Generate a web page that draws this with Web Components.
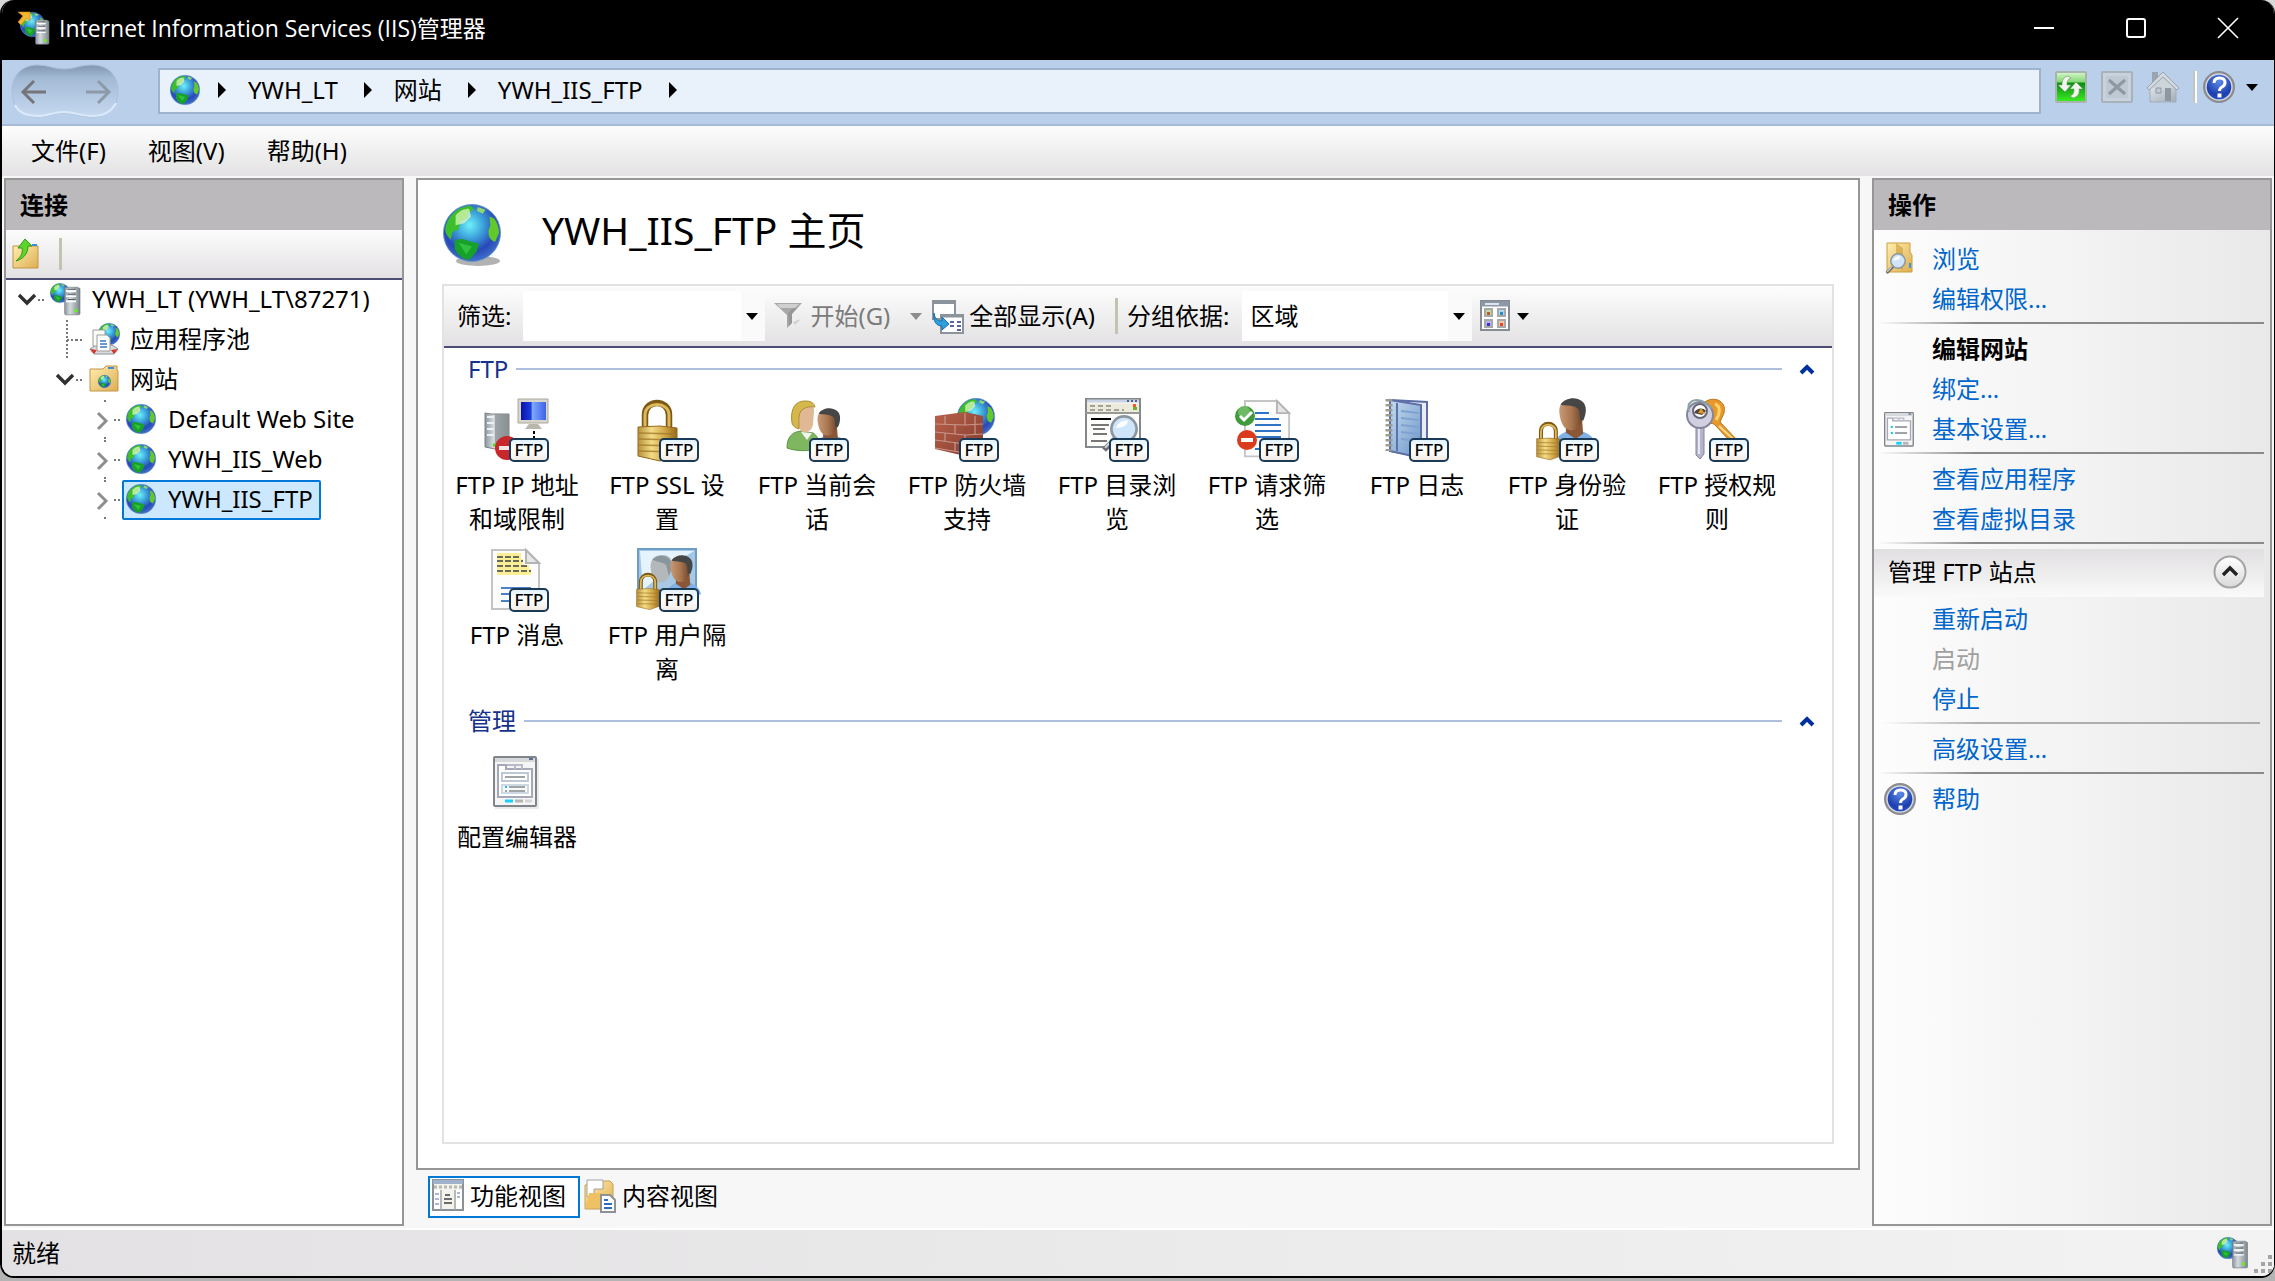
<!DOCTYPE html>
<html lang="zh-CN">
<head>
<meta charset="utf-8">
<title>Internet Information Services (IIS)管理器</title>
<style>
html, body { height: 100%; margin: 0; }
body { background: linear-gradient(#d8d8d8 50%, #b4b4b4 50%); font: 24px/34px "Noto Sans", "Noto Sans CJK SC", sans-serif; color: #000; overflow: hidden; }
</style>
</head>
<body>
<iis-window></iis-window>
<script>
const defs = `<defs>
<radialGradient id="sea" cx=".46" cy=".36" r=".62"><stop offset="0" stop-color="#6ff0fb"/><stop offset=".35" stop-color="#3fa9dc"/><stop offset=".75" stop-color="#2848b8"/><stop offset="1" stop-color="#3b6cc8"/></radialGradient>
<linearGradient id="gold" x2="1"><stop offset="0" stop-color="#b8913c"/><stop offset=".35" stop-color="#f3dc86"/><stop offset=".7" stop-color="#d0a444"/><stop offset="1" stop-color="#94681c"/></linearGradient>
<linearGradient id="steel" x2="1"><stop offset="0" stop-color="#8d979f"/><stop offset=".35" stop-color="#d4dade"/><stop offset="1" stop-color="#7c868c"/></linearGradient>
<linearGradient id="folder" x2="1" y2="1"><stop offset="0" stop-color="#ffeeb0"/><stop offset="1" stop-color="#dfae52"/></linearGradient>
<linearGradient id="badge" y2="1" x2="0"><stop offset="0" stop-color="#dff2fc"/><stop offset=".5" stop-color="#fff"/><stop offset="1" stop-color="#f3e9e2"/></linearGradient>
<linearGradient id="screen" x2="1"><stop offset="0" stop-color="#0a12a8"/><stop offset=".4" stop-color="#1c3de0"/><stop offset=".45" stop-color="#7fa8ff"/><stop offset="1" stop-color="#3d62e8"/></linearGradient>
<linearGradient id="brick" x2="1" y2="1"><stop offset="0" stop-color="#b8634c"/><stop offset="1" stop-color="#843a2c"/></linearGradient>
<linearGradient id="skin" x2="1"><stop offset="0" stop-color="#c99a74"/><stop offset=".5" stop-color="#a97650"/><stop offset="1" stop-color="#6b4128"/></linearGradient>
<linearGradient id="book" x2="1" y2="1"><stop offset="0" stop-color="#c6dbee"/><stop offset="1" stop-color="#6c95c8"/></linearGradient>
<linearGradient id="green" x2="0" y2="1"><stop offset="0" stop-color="#d9f7cf"/><stop offset=".34" stop-color="#7fd870"/><stop offset=".36" stop-color="#0b8a14"/><stop offset="1" stop-color="#3cf023"/></linearGradient>
<radialGradient id="help" cx=".5" cy=".3" r=".8"><stop offset="0" stop-color="#5f8ae8"/><stop offset=".6" stop-color="#1c3fae"/><stop offset="1" stop-color="#2d5fd8"/></radialGradient>
<linearGradient id="grey" x2="1" y2="1"><stop offset="0" stop-color="#dfe5ea"/><stop offset="1" stop-color="#a3adb8"/></linearGradient>
<linearGradient id="knob" x2="0" y2="1"><stop offset="0" stop-color="#fff"/><stop offset="1" stop-color="#d9d9d9"/></linearGradient>
<linearGradient id="blob" x2="0" y2="1"><stop offset="0" stop-color="#8197b0"/><stop offset=".25" stop-color="#a3bad5"/><stop offset="1" stop-color="#c6daf1"/></linearGradient>
</defs>`;

const at = (x, y, s, body) => `<g transform="translate(${x} ${y}) scale(${s})">${body}</g>`;
const globeArt = `<circle cx="30" cy="30" r="29.5" fill="url(#sea)" stroke="#6f95c8" stroke-width="1"/>
<path d="M3 22C7 9 18 2 29 2l3 4-6 3-1 6-7 3-2 8-6 3-2 8-4-5c-2-3-2-6-1-10z" fill="#3cbf2a"/><path d="M13 12c4-5 9-7 14-7l2 8-7 7-9 2z" fill="#e8fbc0" opacity=".7"/>
<path d="M12 38c5-3 10-2 14 0l11 3-2 8-8 9c-8-1-13-7-15-12z" fill="#17a02a"/><path d="M16 40l14 4-6 8z" fill="#3cd048" opacity=".7"/>
<path d="M48 13l5 2c3 4 5 9 5 15l-4 9c-5-1-7-5-7-11l2-6z" fill="#62c92d"/><path d="M36 3l8 3-3 4-6-3z" fill="#8fd870"/>`;
const globe = (x, y, d) => at(x, y, d / 60, globeArt);
const towerArt = `<path d="M1 2h20l4 2v40l-2 1H2l-1-2z" fill="url(#steel)" stroke="#6d777e"/><path d="M3 8h16M3 16h16M3 24h16" stroke="#fff" stroke-width="2.4"/><path d="M6 5h12M6 13h12M6 21h12" stroke="#515b63" stroke-width="1.6"/><rect x="16" y="36" width="5" height="5" fill="#63f020"/>`;
const ftp = `<rect x="25" y="41" width="38" height="22" rx="4" fill="url(#badge)" stroke="#1b3a57" stroke-width="2"/><text x="44" y="58" text-anchor="middle" font-family="Noto Sans, sans-serif" font-size="17" font-weight="500" fill="#000">FTP</text>`;
const lockArt = `<path d="M8 30V15C8 -1 32 -1 32 15v15" fill="none" stroke="#7c5a14" stroke-width="6.5"/><path d="M8 30V15C8 1 32 1 32 15v15" fill="none" stroke="#dcb95c" stroke-width="3"/><path d="M1 27l22 -1 17 2v27l-17 6-22-5z" fill="url(#gold)" stroke="#94681c"/><path d="M2 33l38 1M2 39l38 1M2 45l38 1M2 51l38 1" stroke="#a37a2a" stroke-width="1.4" opacity=".8"/>`;
const manArt = `<path d="M0 44c2-10 10-14 19-14s18 4 20 14z" fill="#7fb0e6"/><path d="M11 20h15l1 13-7 5-9-6z" fill="#8a5836"/><path d="M5 14C4 6 9 1 17 1s11 5 10 14c0 8-5 15-11 15S6 24 5 14z" fill="url(#skin)"/><path d="M6 6C10 0 20-2 26 3c5 4 4 12 1 18l-3-1c0-5 0-9-3-11C16 6 11 8 6 6z" fill="#464646"/>`;
const womanArt = `<path d="M0 47c0-11 5-16 14-17l12 2c5 3 6 8 6 15-10 4-24 3-32 0z" fill="#7fb760" stroke="#5c9644"/><path d="M14 31l6 8 5-7z" fill="#f4f4ee"/><path d="M8 20C6 8 10 3 18 3c7 0 9 3 9 6l-1 15c-2 7-8 9-12 6z" fill="#e0b994"/><path d="M5 22C3 8 8 0 18 0c6 0 9 2 10 6-6-1-12 1-14 4-3 5-2 9-2 18-4-1-6-3-7-6z" fill="#d5b74c" stroke="#ab8d30"/>`;
const pageArt = `<path d="M1 1h34l13 13v46H1z" fill="#fcfcfc" stroke="#c4c4c4" stroke-width="2"/><path d="M35 1v13h13z" fill="#e6e6e6" stroke="#b4b4b4" stroke-width="2"/>`;
const lens = (x, y, s) => at(x, y, s, `<path d="M-8 9L-19 20" stroke="#6c6c70" stroke-width="5"/><path d="M-9 8L-18 18" stroke="#d6d6d6" stroke-width="2"/><circle r="12" fill="#cfe5fb" stroke="#8b959e" stroke-width="2.5"/><path d="M-8-1q4-8 12-7-1 7-12 7z" fill="#fff"/>`);
const tri = c => `<path d="M0 0h12L6 7z" fill="${c}"/>`;
const formArt = `<rect x="1" y="1" width="42" height="49" rx="1" fill="#f5f5f5" stroke="#7f858b" stroke-width="2"/><path d="M2 4h40" stroke="#d5d9dc" stroke-width="4"/><path d="M36 3h4" stroke="#5d708a" stroke-width="2"/><path d="M5 9h8v4h26v28H5z" fill="#fff" stroke="#a6a8b8" stroke-width="2"/><path d="M14 9h15v4M22 9v4" fill="none" stroke="#b9bcc8" stroke-width="2"/>`;

/* name: [viewBox width, viewBox height, artwork] */
const art = {
  globe: [32, 32, globe(0, 1, 30)],
  bigglobe: [64, 64, `<ellipse cx="36" cy="59" rx="22" ry="5" fill="#000" opacity=".3"/>` + globe(1, 2, 58)],
  app: [32, 34, globe(2, 1, 25) + `<path d="M0 1h12v9l-3-3-6 7-3-3 5-6z" fill="#f5b52e" stroke="#c9851b" stroke-width=".6"/>` + at(17, 8, .56, towerArt)],
  server: [32, 34, globe(0, 1, 20) + at(14, 4, .64, towerArt)],
  pool: [32, 34, globe(10, 1, 22) + `<path d="M2 27l6-4h16l6 4-4 5H6z" fill="#d8dde0" stroke="#8a9298"/><path d="M2 27l7 1-3 4zM30 27l-7 1 3 4z" fill="#d8362a"/><path d="M5 8h12v16H5z" fill="#fbfbf6" stroke="#9c9c9c"/><path d="M9 13h10l3 3v13H9z" fill="#fff" stroke="#9c9c9c"/><path d="M12 19h6M12 22h7M12 25h7" stroke="#3a78c0" stroke-width="1.6"/>`],
  sites: [32, 32, `<path d="M2 6h13l3-3h11v4l1 1v20H2z" fill="url(#folder)" stroke="#c09648"/><path d="M20 5h6" stroke="#3c8ce0" stroke-width="2"/>` + globe(10, 12, 13)],
  connect: [32, 34, `<path d="M3 9h25v22H3z" fill="url(#folder)" stroke="#c09648"/><path d="M22 8h5" stroke="#3c8ce0" stroke-width="2"/><path d="M6 24c6-5 7-9 6-13H8l7-9 7 7h-4c0 8-5 13-12 15z" fill="#5fd42c" stroke="#2f9a18"/>`],
  browse: [32, 34, `<path d="M3 1h23v9l2 3v17H3z" fill="url(#folder)" stroke="#caa03c"/><path d="M12 1v20l7 8V6z" fill="#c99d38" opacity=".6"/><path d="M26 21v5" stroke="#2d9cf0" stroke-width="2"/>` + lens(14, 19, .6)],
  form: [32, 34, at(0, 0, .68, formArt + `<path d="M10 22h3M10 31h3" stroke="#18c0f0" stroke-width="3"/><path d="M16 22h18M16 31h18" stroke="#a0a4a8" stroke-width="3"/><path d="M18 46h8" stroke="#18d0ff" stroke-width="4"/><path d="M28 46h8" stroke="#b4b4b4" stroke-width="4"/>`)],
  config: [64, 64, `<rect x="10" y="9" width="44" height="50" fill="#000" opacity=".08"/>` + at(8, 6, 1, formArt + `<rect x="9" y="17" width="26" height="8" fill="#fff" stroke="#bcc8d4" stroke-width="2"/><path d="M12 21h20" stroke="#a0a4a4" stroke-width="2"/><rect x="9" y="29" width="26" height="8" fill="#f6f8fa" stroke="#ccd8e2" stroke-width="2"/><path d="M12 31h2" stroke="#18c0f0" stroke-width="2"/><path d="M16 31h16M12 35h2M16 35h16" stroke="#a0a4a4" stroke-width="2"/><path d="M12 45h8" stroke="#18d0ff" stroke-width="3"/><path d="M22 45h8" stroke="#b4b4b4" stroke-width="3"/><path d="M32 45h7" stroke="#d4d4d4" stroke-width="3"/>`)],
  refresh: [32, 32, `<rect x="1" y="1" width="30" height="30" rx="1" fill="url(#green)" stroke="#a8b4ac" stroke-width="2"/><path d="M13 5c-5 1-6 5-6 9H3l7 7 6-7h-4c0-4 1-6 4-7zM18 27c5-1 7-5 6-9h4l-7-7-6 7h4c0 4-1 6-4 7z" fill="#f2f2ee" stroke="#5a9a54" stroke-width=".6"/>`],
  stop: [32, 32, `<rect x="1" y="1" width="30" height="30" rx="1" fill="#c8d2dc" stroke="#a9b1b9" stroke-width="2"/><rect x="5" y="5" width="22" height="22" fill="#bfc9d3"/><path d="M8 9l16 14M24 9L8 23" stroke="#8f99a3" stroke-width="3.4"/>`],
  home: [32, 32, `<path d="M5 1h6v10H5z" fill="#9aa5b0"/><path d="M3 15h26v16H3z" fill="url(#grey)" stroke="#a3adb8"/><path d="M5 17L16 6l11 11z" fill="#cdd4da"/><path d="M0 17L16 1l16 16-2 2L16 6 2 19z" fill="#d3d9de" stroke="#99a4b0"/><path d="M18 17h6v13h-6z" fill="#8d97a2"/><path d="M9 17h5v5H9z" fill="#c3ccd4" stroke="#8d97a2"/>`],
  help: [32, 32, `<circle cx="16" cy="16" r="14.5" fill="url(#help)" stroke="#8c8c90" stroke-width="3"/><circle cx="16" cy="16" r="13" fill="none" stroke="#d5d8e0" stroke-width="1.4"/><path d="M11 12q0-5 5.5-5t5.5 4.500q0 3-3 4.500-2.500 1.300-2.500 4" fill="none" stroke="#fff" stroke-width="3"/><rect x="14.500" y="22.500" width="4" height="4" fill="#fff"/>`],
  nav: [110, 56, `<path d="M2 28C2 12 12 2 28 2c10 0 16 4 26 4S70 2 82 2c16 0 26 10 26 26S98 54 82 54c-12 0-18-4-28-4s-16 4-26 4C12 54 2 44 2 28z" fill="url(#blob)" stroke="#a9c0dc"/><path d="M5 42c4 8 12 11 23 11 10 0 16-4 26-4s16 4 28 4c12 0 20-5 24-13" fill="none" stroke="#dbe9f9" stroke-width="2"/><path d="M36 29H14M24 18L13 29l11 11" fill="none" stroke="#74767a" stroke-width="3"/><path d="M76 29h22M88 18l11 11-11 11" fill="none" stroke="#8d9aa8" stroke-width="3"/>`],
  min: [20, 20, `<path d="M0 10h20" stroke="#fff" stroke-width="2"/>`],
  max: [20, 20, `<rect x="1" y="1" width="18" height="18" rx="2" fill="none" stroke="#fff" stroke-width="2"/>`],
  close: [20, 20, `<path d="M0 0l20 20M20 0L0 20" stroke="#fff" stroke-width="1.600"/>`],
  down: [12, 7, tri('#000')],
  downgrey: [12, 7, tri('#8c8c8c')],
  right: [10, 16, `<path d="M1 0v16l8-8z" fill="#000"/>`],
  funnel: [32, 32, `<path d="M1 3h28L19 14v9l-5 5V15z" fill="#a8a8a8"/><path d="M4 4h22l-4 4H7z" fill="#cfcfcf"/><path d="M15 13l4-4 6-2-6 7v9l-3 3z" fill="#8c8c8c" opacity=".6"/><path d="M20 22l8-3-6 6z" fill="#d0d0d0"/>`],
  showall: [32, 34, `<path d="M1 2h22v18H1z" fill="#fff" stroke="#8d939b" stroke-width="2"/><path d="M0 3h24" stroke="#8d939b" stroke-width="4"/><path d="M9 16h22v18H9z" fill="#fff" stroke="#8d939b" stroke-width="2"/><path d="M8 17h24" stroke="#8d939b" stroke-width="3"/><path d="M18 23h4M25 23h4M18 27h4M25 27h4M25 31h4" stroke="#5b62a8" stroke-width="2"/><path d="M2 14c1 6 3 8 8 8v-4l7 7-7 6v-4C4 27 1 22 2 14z" fill="#2f9fe0" stroke="#1770a8"/>`],
  views: [32, 32, `<rect x="1" y="1" width="28" height="29" fill="#fff" stroke="#868c94" stroke-width="2"/><path d="M1 4h28" stroke="#8d98a8" stroke-width="5"/><path d="M5 4h14" stroke="#dde4ec" stroke-width="2"/><g stroke="#a8a8a8" stroke-width="2"><rect x="5" y="9" width="7" height="7" fill="#c4d8a0"/><rect x="18" y="9" width="7" height="7" fill="#a8d8f0"/><rect x="5" y="20" width="7" height="7" fill="#b8b0f4"/><rect x="18" y="20" width="7" height="7" fill="#f4c4b0"/></g><path d="M7 12h3v3H7z" fill="#b06030"/><path d="M20 12h3v3h-3z" fill="#3088c8"/><path d="M7 23h3v3H7z" fill="#4030c0"/><path d="M20 23h3v3h-3z" fill="#e04820"/>`],
  up: [16, 12, `<path d="M2 10l6-6 6 6" fill="none" stroke="#00309c" stroke-width="4"/>`],
  knob: [34, 34, `<circle cx="17" cy="17" r="15.500" fill="url(#knob)" stroke="#a4a4a4" stroke-width="2"/><path d="M10 20l7-7 7 7" fill="none" stroke="#222" stroke-width="3.400"/>`],
  features: [32, 32, `<rect x="1" y="0" width="30" height="30" fill="#f4f4ee" stroke="#8c9198" stroke-width="2"/><path d="M1 2h30" stroke="#9eb2cc" stroke-width="4"/><path d="M2 7h28" stroke="#b8b8b0" stroke-width="3" stroke-dasharray="3 2"/><path d="M2 10h6v19H2zM24 10h6v19h-6z" fill="#fff"/><path d="M9 10v20M23 10v20" stroke="#a4a4a4" stroke-width="1.500"/><path d="M13 15h5M12 19h8M12 23h8" stroke="#6c6c6c" stroke-width="2"/><path d="M3 14h4M3 19h4M3 24h4M25 13h3M25 17h3" stroke="#a8b8dc" stroke-width="2"/>`],
  content: [32, 34, `<path d="M1 6h9V2h16l3 3v22l-3 3H1z" fill="url(#folder)" stroke="#c8a050"/><path d="M3 1h16v9h-9v8H3z" fill="#fff" stroke="#a0a0a0"/><path d="M5 14h15l-4 15H1z" fill="#eec264"/><path d="M17 16h9l5 5v12H17z" fill="#fff" stroke="#8c9298" stroke-width="2"/><path d="M20 21h4M20 25h8M20 29h8" stroke="#2a6fc0" stroke-width="2"/>`],
  connected: [36, 34, globe(1, 1, 22) + at(16, 4, .62, towerArt)],
  grip: [22, 22, `<path d="M16 1h4v4h-4zM16 8h4v4h-4zM16 15h4v4h-4zM9 8h4v4H9zM9 15h4v4H9zM2 15h4v4H2z" fill="#a4a4a4"/>`],
  open: [22, 40, `<path d="M3 15l8 8 8-8" fill="none" stroke="#303030" stroke-width="3.400"/>`],
  closed: [22, 40, `<path d="M6 13l8 8-8 8" fill="none" stroke="#8e8e8e" stroke-width="3"/><path d="M13 0v3M13 37v3" stroke="#777" stroke-width="2" stroke-dasharray="2 2"/>`],
  leaf: [22, 40, `<path d="M13 0v40M13 20h9" fill="none" stroke="#777" stroke-width="2" stroke-dasharray="2 2"/>`],
  ip: [64, 64, at(0, 14, 1, `<path d="M0 1l6 1h18v32l-14 3-10-2z" fill="url(#steel)" stroke="#7a8288"/><path d="M10 2h14v32l-14 3z" fill="#8b9396" opacity=".7"/><path d="M2 5h7M2 11h7M2 17h7M2 23h7" stroke="#eef2f4" stroke-width="2"/><path d="M8 33h4" stroke="#4be020" stroke-width="3"/>`) + `<path d="M33 1h30v24H33z" fill="#d9d6cc" stroke="#a9a69a"/><path d="M36 4h25v18H36z" fill="url(#screen)"/><path d="M44 26h9l4 5H40z" fill="#b9b6ac"/><path d="M49 33v7" stroke="#000" stroke-width="2" stroke-dasharray="3 2"/><circle cx="22" cy="50" r="12" fill="#c8282c"/><path d="M14 50h14" stroke="#f4e4e4" stroke-width="4"/>` + ftp],
  ssl: [64, 64, at(2, 2, 1, lockArt) + ftp],
  session: [64, 64, at(28, 10, .92, manArt) + at(2, 3, 1, womanArt) + ftp],
  firewall: [64, 64, globe(22, 0, 38) + `<path d="M0 18l30-4 18 4v38l-18 2-30-7z" fill="url(#brick)"/><path d="M0 26l30 1 18-1M0 34l30 3 18-1M0 42l30 4 18-1M0 50l30 5M10 18v8M30 15v12M20 27v9M40 27v9M10 35v9M30 37v9M20 44v9M40 18v8" stroke="#c8958a" stroke-width="1.200" fill="none"/>` + ftp],
  dir: [64, 64, `<rect x="1" y="1" width="54" height="48" fill="#fdfdfb" stroke="#84888c" stroke-width="2"/><path d="M2 3h52" stroke="#c9d3e4" stroke-width="3"/><path d="M42 3h10" stroke="#53648c" stroke-width="2" stroke-dasharray="2 2"/><path d="M2 10h52" stroke="#eceada" stroke-width="9"/><path d="M5 8h22M5 12h34" stroke="#a2a298" stroke-width="2" stroke-dasharray="5 3"/><path d="M48 6h3v3h-3z" fill="#f05a28"/><path d="M48 9h4v3h-4z" fill="#6ab42d"/><path d="M1 15h54" stroke="#9a9a94" stroke-width="2"/><path d="M6 21h20" stroke="#000" stroke-width="2"/><path d="M6 27h18M8 31h12M8 36h14M6 43h16" stroke="#777" stroke-width="2"/>` + lens(39, 31, 1.050) + ftp],
  request: [64, 64, at(9, 2, .94, pageArt) + `<path d="M20 15h14M20 21h24M20 27h26M20 33h26M20 39h26M20 51h10" stroke="#2f74c4" stroke-width="2"/><circle cx="10" cy="18" r="10" fill="#3f9a3c"/><circle cx="9" cy="14" r="6" fill="#8fd080" opacity=".6"/><path d="M5 18l4 4 8-8" fill="none" stroke="#fff" stroke-width="3"/><circle cx="12" cy="42" r="10" fill="#dc3a1c"/><path d="M6 42h12" stroke="#fff" stroke-width="4"/>` + ftp],
  log: [64, 64, `<path d="M5 2l37 2v56L5 53z" fill="#e8ecf4" stroke="#5d6ea6" stroke-width="2"/><path d="M5 2l31 5v53L5 53z" fill="url(#book)" stroke="#5d6ea6" stroke-width="2"/><path d="M12 5v48" stroke="#5674b0" stroke-width="2"/><path d="M16 13l18 2M16 20l18 2M16 27l18 2M16 34l18 2M16 41l18 2" stroke="#7fa3d0" stroke-width="2"/><path d="M4 1v52" stroke="#9c9c94" stroke-width="7" stroke-dasharray="2.500 2.500"/>` + ftp],
  auth: [64, 64, at(19, 0, 1.080, manArt) + at(1, 24, .62, lockArt) + ftp],
  keys: [64, 64, `<path d="M20 4c8-6 22-2 19 11l-4 9 17 18-7 1-16-17-9-2z" fill="#e6992a" stroke="#b8741a"/><path d="M30 6c6 2 5 10 1 16" fill="none" stroke="#ffd26a" stroke-width="3"/><path d="M34 28l14 13" stroke="#ffd98a" stroke-width="2"/><path d="M11 28h8v28l-4 5-4-4z" fill="#b4b4ca" stroke="#84849c"/><path d="M14 30v26" stroke="#e8e8f2" stroke-width="2"/><circle cx="15" cy="17" r="13" fill="#d0d0e0" stroke="#85859c" stroke-width="2"/><circle cx="15" cy="13" r="7" fill="#fff" stroke="#66667a" stroke-width="2"/><path d="M9 15c2-5 9-6 12-2l-4 4z" fill="#4c4440"/><path d="M13 15l3-5 4 6z" fill="#e09a28"/><path d="M4 14C1 4 9-1 19 4l8 6" fill="none" stroke="#8ea0a8" stroke-width="2"/>` + ftp],
  message: [64, 64, at(6, 1, 1, pageArt) + `<path d="M12 8h24M12 14h26M12 20h32M12 24h34" stroke="#fbee94" stroke-width="6"/><path d="M12 9h22M12 13h26M12 18h30M12 23h34" stroke="#6a6a58" stroke-width="2" stroke-dasharray="6 2"/><path d="M16 40h30M16 46h20M16 53h20" stroke="#4a80c8" stroke-width="2"/>` + ftp],
  isolate: [64, 64, `<rect x="3" y="1" width="58" height="44" fill="#a4c8e6" stroke="#6d9cc4" stroke-width="2"/><path d="M5 3h54L44 12 8 42z" fill="#e4f3fc"/>` + at(10, 6, .92, `<path d="M0 44c2-10 10-14 19-14s18 4 20 14z" fill="#a8c8e4"/><path d="M6 14C6 5 11 1 19 1s11 5 10 14c-1 8-5 16-12 16S7 24 6 14z" fill="#b4b8ba"/><path d="M8 6c6-7 20-5 21 5 0 5-1 9-3 13l-3-12C18 8 13 9 8 6z" fill="#8a969e"/>`) + at(31, 7, .9, manArt) + at(1, 25, .6, lockArt) + ftp],
};

const define = (name, css, html) => customElements.define(name, class extends HTMLElement {
  connectedCallback() {
    if (this.shadowRoot) return;
    const root = this.attachShadow({ mode: 'open' });
    const body = typeof html === 'function' ? html(this) : html;
    root.innerHTML = `<style>*{box-sizing:border-box}button,input,select{font:inherit;color:inherit;background:none;border:0;padding:0;margin:0;border-radius:0;outline:0}a{color:inherit;text-decoration:none}${css}</style>${body}`;
  }
});
const attr = (e, n, d = '') => e.getAttribute(n) ?? d;

define('iis-icon', ':host{display:block;flex:none}svg{display:block;overflow:visible}',
  e => { const [w, h, body] = art[attr(e, 'name')]; return `<svg width="${w}" height="${h}" viewBox="0 0 ${w} ${h}" aria-hidden="true">${defs}${body}</svg>`; });

define('iis-titlebar', `:host{display:flex;align-items:center;height:60px;box-sizing:border-box;padding:0 0 4px 16px;background:#000;color:#fff;font:23px/34px "Open Sans","Noto Sans CJK SC",sans-serif}
span{flex:1;margin-left:9px}button{width:92px;height:56px;display:grid;place-items:center}`,
  `<iis-icon name="app"></iis-icon><span>Internet Information Services (IIS)管理器</span>
<button aria-label="最小化"><iis-icon name="min"></iis-icon></button><button aria-label="最大化"><iis-icon name="max"></iis-icon></button><button aria-label="关闭"><iis-icon name="close"></iis-icon></button>`);

define('iis-address', `:host{display:flex;align-items:center;height:66px;box-sizing:border-box;background:#bad0ea;border-bottom:2px solid #a6bcd6;padding:0 16px 2px 8px}
.path{flex:1;display:flex;align-items:center;height:46px;border:2px solid #9db4cc;background:#e9f1fa;margin:0 14px 0 38px;padding:0 0 2px 10px}
.path>iis-icon:first-child{margin-right:15px}.path a{margin:0 25px 0 21px}
.tools{display:flex;gap:14px;align-items:center;padding-bottom:8px}.tools button{display:flex;align-items:center;gap:11px}
.help{border-left:2px solid #c4c4c4;box-shadow:inset 2px 0 #fff}.tools .help{padding-left:8px}`,
  `<iis-icon name="nav"></iis-icon><nav class="path"><iis-icon name="globe"></iis-icon><iis-icon name="right"></iis-icon><a href="#">YWH_LT</a><iis-icon name="right"></iis-icon><a href="#">网站</a><iis-icon name="right"></iis-icon><a href="#">YWH_IIS_FTP</a><iis-icon name="right"></iis-icon></nav>
<div class="tools"><button aria-label="刷新"><iis-icon name="refresh"></iis-icon></button><button aria-label="停止"><iis-icon name="stop"></iis-icon></button><button aria-label="主页"><iis-icon name="home"></iis-icon></button><button class="help" aria-label="帮助"><iis-icon name="help"></iis-icon><iis-icon name="down"></iis-icon></button></div>`);

define('iis-menubar', `:host{display:flex;align-items:center;gap:42px;height:50px;padding-left:29px;background:linear-gradient(#fdfdfd,#e4e2e4)}`,
  `<button>文件(F)</button><button>视图(V)</button><button>帮助(H)</button>`);

define('iis-panel', `:host{display:flex;flex-direction:column;border:2px solid #969696;background:#fff;min-width:0}
h2{margin:0;height:50px;flex:none;background:#bcb9bd;font-size:24px;line-height:50px;font-weight:700;padding-left:14px}`,
  e => `<h2>${attr(e, 'heading')}</h2><slot></slot>`);

define('iis-tree-item', `:host{display:flex;align-items:center;height:40px}
.dots{width:8px;height:2px;background:repeating-linear-gradient(90deg,#777 0 2px,transparent 2px 4px)}
button{display:flex;align-items:center;gap:10px;height:40px;border:2px solid transparent;padding:0 6px 2px 2px;border-radius:2px;white-space:nowrap}
:host([selected]) button{background:#cce8ff;border-color:#0078d7}`,
  e => `<iis-icon name="${attr(e, 'state')}"></iis-icon><span class="dots"></span><button><iis-icon name="${attr(e, 'icon')}"></iis-icon><slot></slot></button>`);

define('iis-tree', `.bar{display:flex;align-items:center;height:50px;background:linear-gradient(#fcfcfc,#e3e1e3);border-bottom:2px solid #4c4c74;padding-left:4px}
.bar::after{content:"";width:3px;height:32px;background:#c4c3b0;margin-left:17px}
.tree{padding-left:10px}.l1{padding-left:38px}.l2{padding-left:76px}`,
  `<div class="bar"><button aria-label="连接"><iis-icon name="connect"></iis-icon></button></div>
<div class="tree"><iis-tree-item state="open" icon="server">YWH_LT (YWH_LT\\87271)</iis-tree-item>
<div class="l1"><iis-tree-item state="leaf" icon="pool">应用程序池</iis-tree-item><iis-tree-item state="open" icon="sites">网站</iis-tree-item></div>
<div class="l2"><iis-tree-item state="closed" icon="globe">Default Web Site</iis-tree-item><iis-tree-item state="closed" icon="globe">YWH_IIS_Web</iis-tree-item><iis-tree-item state="closed" icon="globe" selected>YWH_IIS_FTP</iis-tree-item></div></div>`);

define('iis-feature', `:host{display:flex;flex-direction:column;align-items:center}
a{display:flex;flex-direction:column;align-items:center;gap:6px;width:130px;text-align:center;line-height:34px}`,
  e => `<a href="#"><iis-icon name="${attr(e, 'icon')}"></iis-icon><span><slot></slot></span></a>`);

define('iis-group', `:host{display:block;margin-bottom:14px}
.head{display:flex;align-items:center;height:42px;gap:8px;color:#15318c;padding:0 17px 0 24px;margin-bottom:8px}
.line{flex:1;height:2px;background:#aebede;margin-right:9px}
.grid{display:grid;grid-template-columns:repeat(auto-fill,150px);row-gap:12px;margin-left:-2px}`,
  e => `<div class="head"><span>${attr(e, 'heading')}</span><span class="line"></span><button aria-label="折叠"><iis-icon name="up"></iis-icon></button></div><div class="grid"><slot></slot></div>`);

define('iis-filterbar', `:host{display:flex;align-items:center;height:62px;background:linear-gradient(#fdfdfd,#e3e1e3);border-bottom:2px solid #4c4c74;padding-left:13px;white-space:nowrap}
.box{display:grid;align-items:center;height:50px;background:linear-gradient(90deg,#fff calc(100% - 24px),#fafafa 0);margin:0 8px 0 12px}
.box>*{grid-area:1/1}.box input{width:242px;height:50px;padding:0 30px 0 8px}.box select{width:230px;height:50px;appearance:none;padding-left:9px}
.box iis-icon{justify-self:end;margin-right:7px;pointer-events:none}
button{display:flex;align-items:center;gap:5px;flex:none}button:disabled{color:#7b7b7b}
.sep{width:3px;height:36px;background:#c4c3b0;margin:0 9px 0 20px}.go{margin-right:20px}.go+iis-icon{margin-right:10px}`,
  `<label for="f">筛选:</label><span class="box"><input id="f" type="text"><iis-icon name="down"></iis-icon></span>
<button class="go" disabled><iis-icon name="funnel"></iis-icon>开始(G)</button><iis-icon name="downgrey"></iis-icon>
<button><iis-icon name="showall"></iis-icon>全部显示(A)</button><span class="sep"></span>
<label for="g">分组依据:</label><span class="box"><select id="g"><option>区域</option></select><iis-icon name="down"></iis-icon></span>
<button aria-label="视图"><iis-icon name="views"></iis-icon><iis-icon name="down"></iis-icon></button>`);

define('iis-home', `:host{display:flex;flex-direction:column;flex:1;border:2px solid #969696;background:#fff;padding:0 24px 24px}
header{display:flex;align-items:center;gap:36px;height:104px;padding-top:4px}
h1{margin:0;padding-bottom:8px;font-size:39px;line-height:54px;font-weight:400}
.box{flex:1;border:2px solid #e2e2e2}`,
  `<header><iis-icon name="bigglobe"></iis-icon><h1>YWH_IIS_FTP 主页</h1></header>
<div class="box"><iis-filterbar></iis-filterbar>
<iis-group heading="FTP"><iis-feature icon="ip">FTP IP 地址和域限制</iis-feature><iis-feature icon="ssl">FTP SSL 设置</iis-feature><iis-feature icon="session">FTP 当前会话</iis-feature><iis-feature icon="firewall">FTP 防火墙支持</iis-feature><iis-feature icon="dir">FTP 目录浏览</iis-feature><iis-feature icon="request">FTP 请求筛选</iis-feature><iis-feature icon="log">FTP 日志</iis-feature><iis-feature icon="auth">FTP 身份验证</iis-feature><iis-feature icon="keys">FTP 授权规则</iis-feature><iis-feature icon="message">FTP 消息</iis-feature><iis-feature icon="isolate">FTP 用户隔离</iis-feature></iis-group>
<iis-group heading="管理"><iis-feature icon="config">配置编辑器</iis-feature></iis-group></div>`);

define('iis-tabs', `:host{display:flex;height:56px;align-items:flex-start;padding:6px 0 0 12px}
button{display:flex;align-items:center;gap:6px;height:42px;border:2px solid transparent;padding:0 12px 2px 2px}
button[aria-selected=true]{border-color:#0078d7;background:#fff}`,
  `<button role="tab" aria-selected="true"><iis-icon name="features"></iis-icon>功能视图</button><button role="tab" aria-selected="false"><iis-icon name="content"></iis-icon>内容视图</button>`);

define('iis-action', `:host{display:flex;align-items:center;height:40px;padding-left:10px;color:#0066cc}
.icon{width:48px;flex:none}:host([bold]){color:#000;font-weight:700}:host([disabled]){color:#a0a0a0}`,
  e => `<span class="icon">${e.hasAttribute('icon') ? `<iis-icon name="${attr(e, 'icon')}"></iis-icon>` : ''}</span>` + (e.hasAttribute('bold') ? '<slot></slot>' : e.hasAttribute('disabled') ? '<button disabled><slot></slot></button>' : '<a href="#"><slot></slot></a>'));

define('iis-actions', `:host{display:block;flex:1;padding-top:9px;background:linear-gradient(90deg,#fdfdfd,#e9e9e9)}
button:disabled{color:inherit}hr{border:0;height:2px;margin:3px 6px 5px 4px;background:linear-gradient(90deg,transparent,#8a8a8a 25%)}hr.soft{opacity:.65;margin-right:10px;margin-left:8px}
h3{display:flex;align-items:center;justify-content:space-between;height:48px;margin:0 6px 2px 0;padding:0 17px 2px 14px;font-size:24px;font-weight:400;background:linear-gradient(#e1dfe1,#fafafa)}`,
  `<iis-action icon="browse">浏览</iis-action><iis-action>编辑权限...</iis-action><hr>
<iis-action bold>编辑网站</iis-action><iis-action>绑定...</iis-action><iis-action icon="form">基本设置...</iis-action><hr>
<iis-action>查看应用程序</iis-action><iis-action>查看虚拟目录</iis-action><hr>
<h3>管理 FTP 站点<button aria-label="折叠"><iis-icon name="knob"></iis-icon></button></h3>
<iis-action>重新启动</iis-action><iis-action disabled>启动</iis-action><iis-action>停止</iis-action><hr class="soft">
<iis-action>高级设置...</iis-action><hr><iis-action icon="help">帮助</iis-action>`);

define('iis-statusbar', `:host{display:flex;align-items:center;height:48px;border-top:2px solid #fff;background:linear-gradient(90deg,#e3e1e3,#f3f3f3);padding-left:10px}span{flex:1}iis-icon+iis-icon{align-self:flex-end}`,
  `<span>就绪</span><iis-icon name="connected"></iis-icon><iis-icon name="grip"></iis-icon>`);

define('iis-window', `:host{display:flex;flex-direction:column;height:calc(100vh - 3px);box-sizing:border-box;border:2px solid #000;border-top:0;border-right-width:1px;border-radius:14px;overflow:hidden;background:#f7f7f7}
main{flex:1;display:flex;gap:12px;padding:2px;min-height:0}
.side{width:400px;flex:none;box-sizing:border-box}.mid{flex:1;display:flex;flex-direction:column;min-width:0}`,
  `<iis-titlebar></iis-titlebar><iis-address></iis-address><iis-menubar></iis-menubar>
<main><iis-panel class="side" heading="连接"><iis-tree></iis-tree></iis-panel>
<div class="mid"><iis-home></iis-home><iis-tabs></iis-tabs></div>
<iis-panel class="side" heading="操作"><iis-actions></iis-actions></iis-panel></main>
<iis-statusbar></iis-statusbar>`);
</script>
</body>
</html>
